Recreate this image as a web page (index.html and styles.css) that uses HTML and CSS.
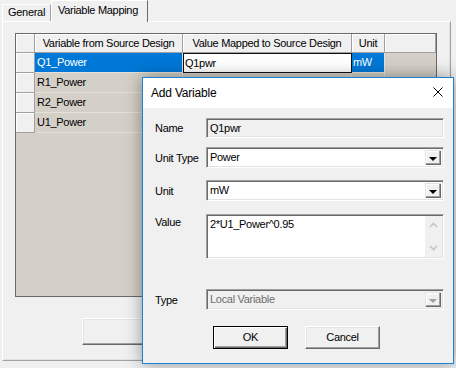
FILE: index.html
```html
<!DOCTYPE html>
<html lang="en">
<head>
    <meta charset="UTF-8">
    <title>Variable Mapping</title>
    <link rel="stylesheet" href="styles.css">
</head>
<body>
    <div class="tabs">
        <div class="tab">General</div>
        <div class="tab active">Variable Mapping</div>
    </div>

    <div class="panel">
        <div class="grid">
            <div class="grid-head">
                <div class="hcell rowhead"></div>
                <div class="hcell c1">Variable from Source Design</div>
                <div class="hcell c2">Value Mapped to Source Design</div>
                <div class="hcell c3">Unit</div>
                <div class="hcell c4"></div>
            </div>
            <div class="grid-row selected">
                <div class="hcell rowhead"></div>
                <div class="cell c1">Q1_Power</div>
                <div class="cell c2 editing">Q1pwr</div>
                <div class="cell c3">mW</div>
            </div>
            <div class="grid-row">
                <div class="hcell rowhead"></div>
                <div class="cell c1">R1_Power</div>
                <div class="cell c2"></div>
                <div class="cell c3"></div>
            </div>
            <div class="grid-row">
                <div class="hcell rowhead"></div>
                <div class="cell c1">R2_Power</div>
                <div class="cell c2"></div>
                <div class="cell c3"></div>
            </div>
            <div class="grid-row">
                <div class="hcell rowhead"></div>
                <div class="cell c1">U1_Power</div>
                <div class="cell c2"></div>
                <div class="cell c3"></div>
            </div>
        </div>
        <div class="panel-buttons">
            <div class="button wide"></div>
        </div>
    </div>

    <!-- modal dialog on top of the mapping tab -->
    <div class="dialog">
        <div class="titlebar">
            <span class="title">Add Variable</span>
            <svg class="close" width="10" height="10" viewBox="0 0 10 10">
                <path d="M0.5 0.5 L9.5 9.5 M9.5 0.5 L0.5 9.5" stroke="#000" stroke-width="1" fill="none"/>
            </svg>
        </div>
        <div class="dialog-body">
            <div class="form-row row-name">
                <label>Name</label>
                <div class="field readonly">Q1pwr</div>
            </div>
            <div class="form-row row-unittype">
                <label>Unit Type</label>
                <div class="field combo">Power<span class="drop"><i class="arrow"></i></span></div>
            </div>
            <div class="form-row row-unit">
                <label>Unit</label>
                <div class="field combo">mW<span class="drop"><i class="arrow"></i></span></div>
            </div>
            <div class="form-row row-value">
                <label>Value</label>
                <div class="field memo">
                    <span class="memo-text">2*U1_Power^0.95</span>
                    <span class="vscroll">
                        <svg width="9" height="6" viewBox="0 0 9 6"><path d="M1 5 L4.5 1.5 L8 5" stroke="#c4c4c4" stroke-width="1.6" fill="none"/></svg>
                        <svg width="9" height="6" viewBox="0 0 9 6"><path d="M1 1 L4.5 4.5 L8 1" stroke="#c4c4c4" stroke-width="1.6" fill="none"/></svg>
                    </span>
                </div>
            </div>
            <div class="form-row row-type">
                <label>Type</label>
                <div class="field combo disabled">Local Variable<span class="drop"><i class="arrow"></i></span></div>
            </div>
            <div class="dialog-buttons">
                <div class="button default">OK</div>
                <div class="button">Cancel</div>
            </div>
        </div>
    </div>
</body>
</html>
```

FILE: styles.css
```css
body {
    margin: 0;
    width: 456px;
    height: 368px;
    overflow: hidden;
    position: relative;
    background: #f0f0f0;
    font-family: "Liberation Sans", Arial, sans-serif;
    font-size: 11px;
    letter-spacing: -0.3px;
    color: #000;
}

/* tabs */
.tabs {
    display: flex;
    align-items: flex-end;
    height: 21px;
    padding-left: 2px;
    position: relative;
    z-index: 1;
}
.tab {
    box-sizing: border-box;
    height: 17px;
    line-height: 15px;
    padding-left: 5px;
    width: 49px;
    border-left: 1px solid #fff;
    border-top: 1px solid #fff;
    border-right: 1px solid #a0a0a0;
}
.tab.active {
    width: 97px;
    height: 22px;
    line-height: 18px;
    padding-left: 6px;
    margin-bottom: -1px;
    background: #f0f0f0;
    border-right: 1px solid #696969;
}

.panel {
    box-sizing: border-box;
    margin-left: 2px;
    width: 449px;
    height: 340px;
    border-top: 1px solid #fff;
    border-left: 1px solid #fff;
    border-right: 1px solid #a0a0a0;
    border-bottom: 1px solid #a0a0a0;
    box-shadow: inset -1px -1px 0 #e3e3e3;
}

/* data grid */
.grid {
    box-sizing: border-box;
    margin: 11px 0 0 12px;
    width: 422px;
    height: 264px;
    border: 1px solid #696969;
    background: #d4d0c8;
}
.grid-head, .grid-row {
    display: flex;
}
.grid-head {
    height: 19px;
}
.grid-row {
    height: 20px;
}
.hcell {
    box-sizing: border-box;
    height: 100%;
    background: #f0f0f0;
    border-right: 1px solid #a0a0a0;
    border-bottom: 1px solid #a0a0a0;
    box-shadow: inset 1px 1px 0 #fff;
    line-height: 18px;
    text-align: center;
    white-space: nowrap;
}
.rowhead { width: 19px; flex: none; }
.c1 { width: 148px; flex: none; }
.c2 { width: 169px; flex: none; }
.c3 { width: 33px; flex: none; }
.c4 { width: 51px; flex: none; }

.cell {
    box-sizing: border-box;
    height: 100%;
    padding-left: 2px;
    line-height: 19px;
    border-right: 1px solid #e4e1dc;
    border-bottom: 1px solid #e4e1dc;
    white-space: nowrap;
}
.selected .cell {
    background: #0078d7;
    color: #fff;
}
.selected .c3 {
    padding-left: 1px;
}
.selected .cell.editing {
    background: #fff;
    color: #000;
    border: 1px solid #101010;
    padding-left: 1px;
    line-height: 18px;
}

.panel-buttons {
    margin: 21px 0 0 79px;
}
.button.wide {
    width: 150px;
    height: 27px;
}

/* buttons */
.button {
    box-sizing: border-box;
    width: 75px;
    height: 23px;
    line-height: 21px;
    text-align: center;
    background: #f0f0f0;
    border-top: 1px solid #fff;
    border-left: 1px solid #fff;
    border-right: 1px solid #696969;
    border-bottom: 1px solid #696969;
    box-shadow: inset -1px -1px 0 #a0a0a0, inset 1px 1px 0 #e3e3e3;
}
.button.default {
    border: 1px solid #000;
    box-shadow: inset 1px 1px 0 #fff, inset -1px -1px 0 #696969, inset -2px -2px 0 #a0a0a0;
}

/* dialog */
.dialog {
    position: absolute;
    left: 142px;
    top: 77px;
    box-sizing: border-box;
    width: 312px;
    height: 287px;
    border: 1px solid #1883d7;
    background: #f0f0f0;
    box-shadow: 0 0 16px rgba(0, 0, 0, 0.4);
    z-index: 2;
}
.titlebar {
    position: relative;
    height: 30px;
    background: #fff;
}
.title {
    display: block;
    padding-left: 8px;
    line-height: 30px;
    font-size: 12px;
    letter-spacing: -0.2px;
}
.close {
    position: absolute;
    right: 10px;
    top: 9px;
}
.dialog-body {
    padding-left: 12px;
}
.form-row {
    display: flex;
}
.form-row label {
    width: 51px;
    flex: none;
    align-self: center;
}
.row-name { margin-top: 10px; }
.row-unittype { margin-top: 9px; }
.row-unit { margin-top: 12px; }
.row-value { margin-top: 13px; }
.row-value label { align-self: flex-start; padding-top: 2px; }
.row-type { margin-top: 30px; }

.field {
    box-sizing: border-box;
    position: relative;
    width: 238px;
    height: 21px;
    padding-left: 3px;
    line-height: 19px;
    background: #fff;
    border-top: 1px solid #a0a0a0;
    border-left: 1px solid #a0a0a0;
    border-right: 1px solid #fff;
    border-bottom: 1px solid #fff;
    box-shadow: inset 1px 1px 0 #696969, inset -1px -1px 0 #e3e3e3;
    white-space: nowrap;
}
.field.readonly {
    height: 20px;
    background: #f0f0f0;
}
.field.disabled {
    background: #f0f0f0;
    color: #6d6d6d;
}
.drop {
    position: absolute;
    right: 2px;
    top: 2px;
    bottom: 2px;
    width: 16px;
    background: #f0f0f0;
    box-shadow: inset 1px 1px 0 #e3e3e3, inset -1px -1px 0 #696969, inset -2px -2px 0 #a0a0a0, inset 2px 2px 0 #fff;
}
.arrow {
    position: absolute;
    left: 4px;
    top: 7px;
    width: 0;
    height: 0;
    border-left: 4px solid transparent;
    border-right: 4px solid transparent;
    border-top: 4px solid #000;
}
.disabled .arrow {
    border-top-color: #a0a0a0;
}

.field.memo {
    height: 45px;
    line-height: 16px;
    padding-top: 1px;
}
.vscroll {
    position: absolute;
    right: 1px;
    top: 1px;
    bottom: 1px;
    width: 17px;
    background: #f0f0f0;
    display: flex;
    flex-direction: column;
    justify-content: space-between;
    align-items: center;
    padding: 6px 0 6px;
    box-sizing: border-box;
}
.vscroll svg {
    display: block;
}

.dialog-buttons {
    display: flex;
    gap: 17px;
    margin: 16px 0 0 58px;
}
```
